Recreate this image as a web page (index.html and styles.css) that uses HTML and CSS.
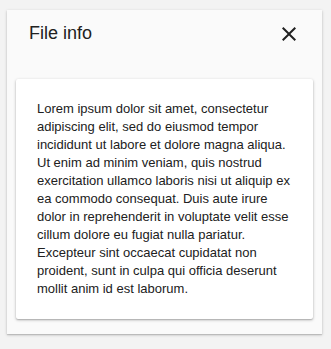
FILE: index.html
```html
<!DOCTYPE html>
<html lang="en">
<head>
    <meta charset="UTF-8" />
    <meta name="viewport" content="width=device-width, initial-scale=1" />
    <title>File info</title>
    <link rel="stylesheet" href="styles.css">
</head>
<body>
    <div class="panel">
        <div class="panel-header">
            <h2 class="panel-title">File info</h2>
            <button class="close-btn" aria-label="Close">
                <svg width="24" height="24" viewBox="0 0 24 24">
                    <path d="M19 6.41L17.59 5 12 10.59 6.41 5 5 6.41 10.59 12 5 17.59 6.41 19 12 13.41 17.59 19 19 17.59 13.41 12z" fill="#212121"/>
                </svg>
            </button>
        </div>
        <div class="card">
            <p class="card-text">Lorem ipsum dolor sit amet, consectetur adipiscing elit, sed do eiusmod tempor incididunt ut labore et dolore magna aliqua. Ut enim ad minim veniam, quis nostrud exercitation ullamco laboris nisi ut aliquip ex ea commodo consequat. Duis aute irure dolor in reprehenderit in voluptate velit esse cillum dolore eu fugiat nulla pariatur. Excepteur sint occaecat cupidatat non proident, sunt in culpa qui officia deserunt mollit anim id est laborum.</p>
        </div>
    </div>
</body>
</html>
```

FILE: styles.css
```css
body {
    margin: 0;
    padding: 10px 9px 15px 7px;
    background-color: #f3f3f3;
    font-family: "Liberation Sans", Arial, sans-serif;
    color: #212121;
}
.panel {
    background-color: #fafafa;
    box-shadow: 0 1px 3px rgba(0, 0, 0, 0.2), 0 1px 1px rgba(0, 0, 0, 0.12);
    padding: 0 9px 15px 9px;
}
.panel-header {
    display: flex;
    align-items: flex-start;
    justify-content: space-between;
    height: 69px;
    padding: 11px 12px 0 13px;
    box-sizing: border-box;
}
.panel-title {
    margin: 0;
    font-size: 18px;
    font-weight: normal;
    line-height: 24px;
}
.close-btn {
    border: none;
    background: none;
    padding: 0;
    margin-top: 1px;
    width: 24px;
    height: 24px;
    cursor: pointer;
}
.close-btn svg {
    display: block;
}
.card {
    background-color: #fff;
    border-radius: 2px;
    box-shadow: 0 1px 3px rgba(0, 0, 0, 0.3), 0 1px 1px rgba(0, 0, 0, 0.1);
    padding: 21px 21px;
}
.card-text {
    margin: 0;
    font-size: 13px;
    line-height: 18px;
}
```
